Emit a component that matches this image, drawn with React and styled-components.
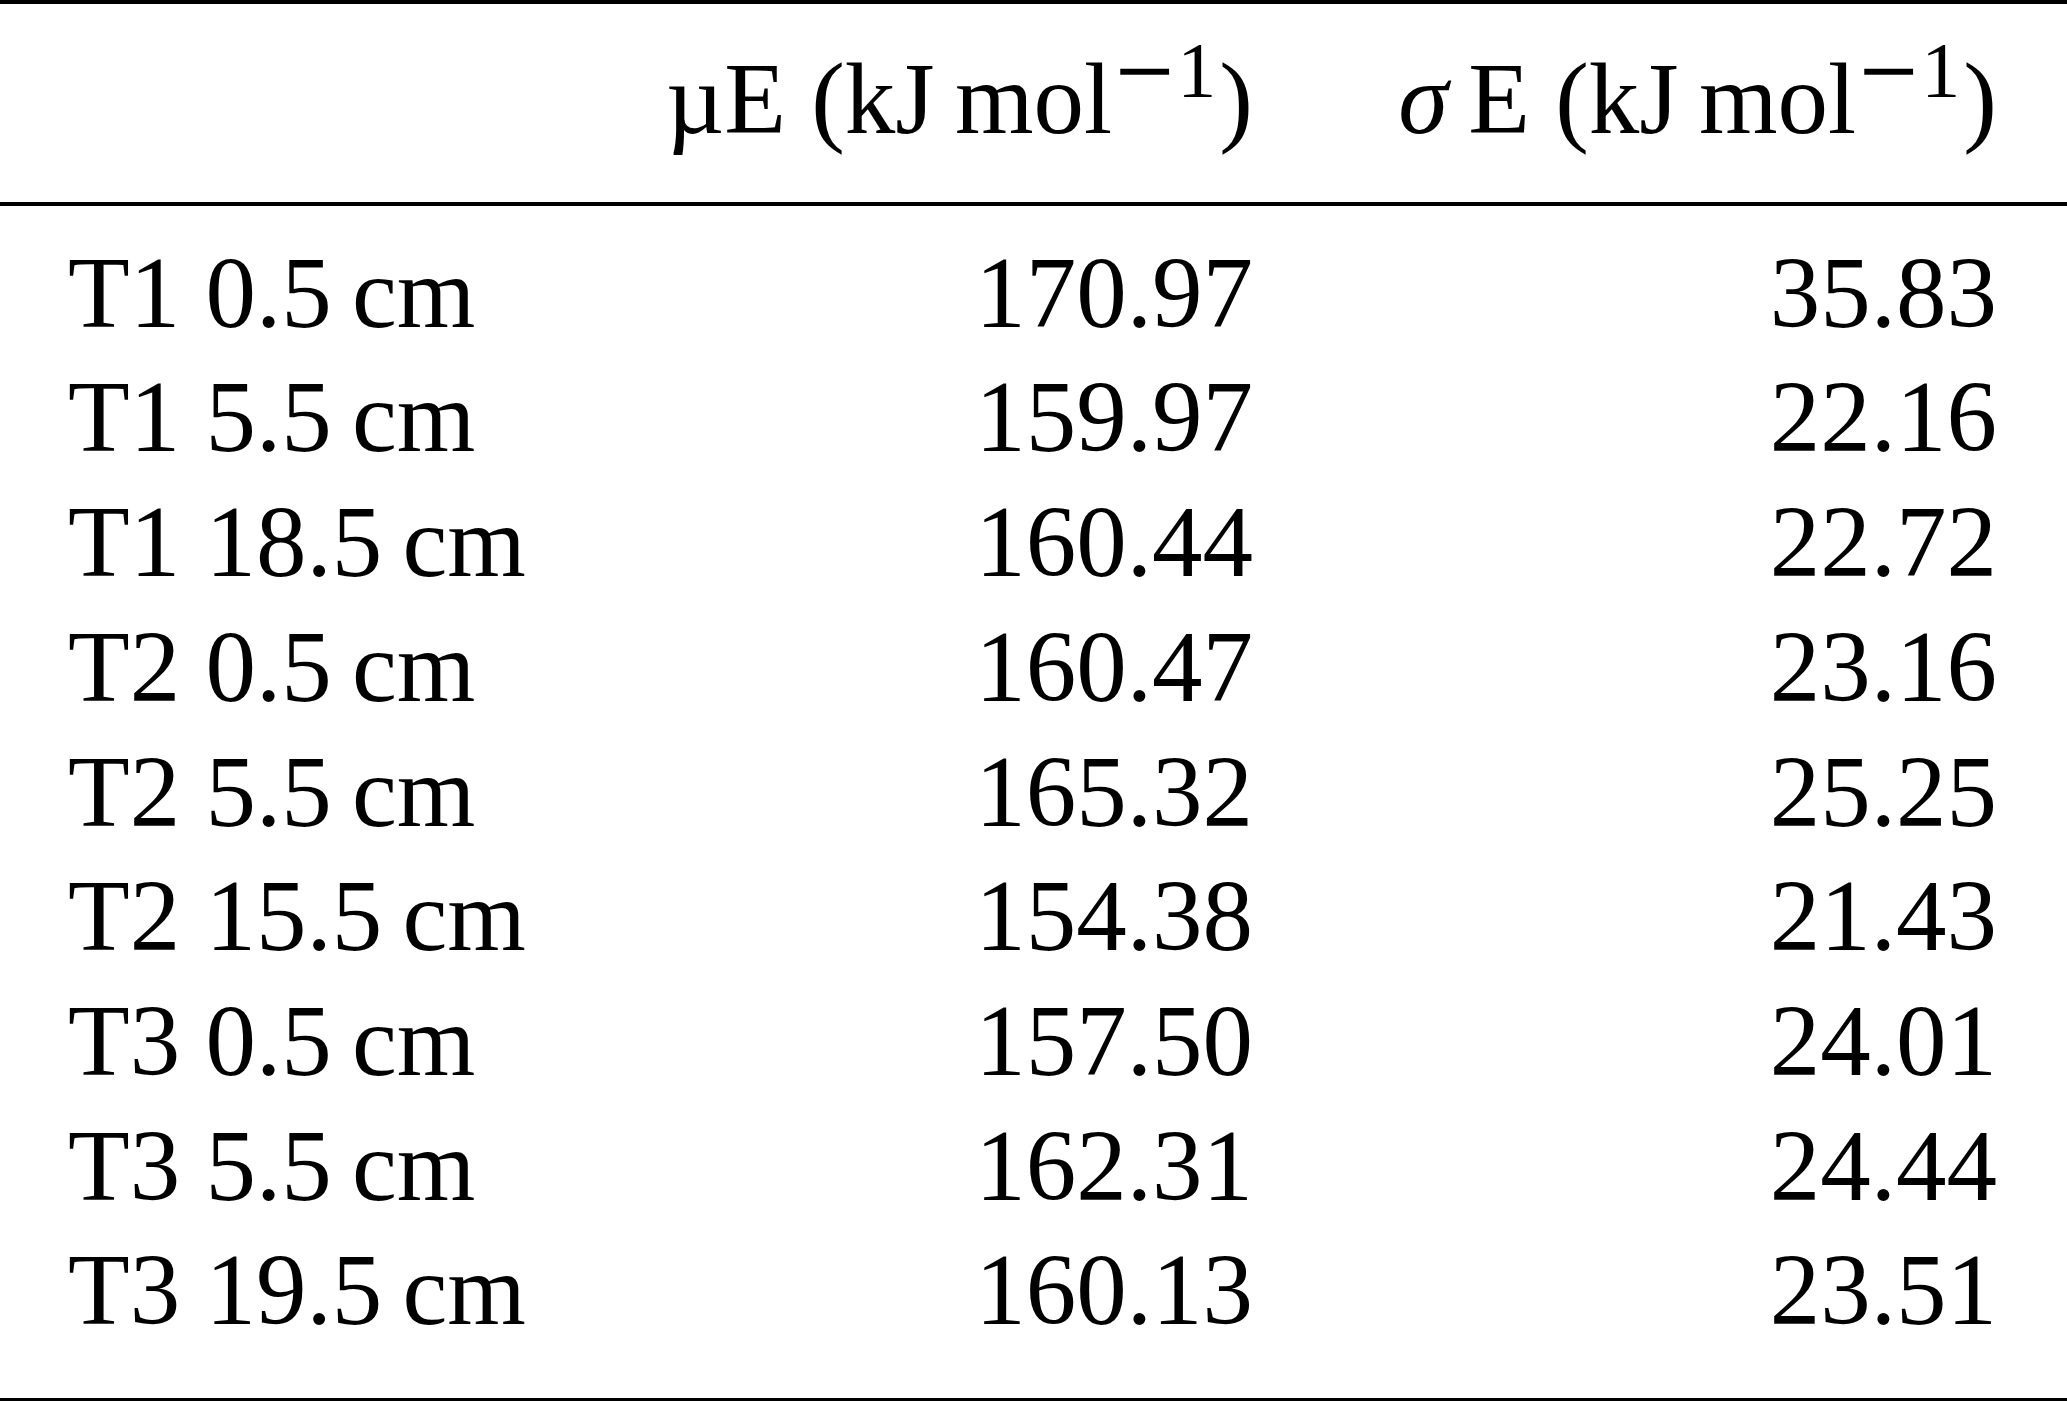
import React from "react";
import styled, { createGlobalStyle } from "styled-components";

const GlobalStyle = createGlobalStyle`
  html, body {
    margin: 0;
    padding: 0;
    background: #ffffff;
  }
  body {
    overflow: hidden;
  }
`;

const rows = [
  ["T1", "0.5", "170.97", "35.83"],
  ["T1", "5.5", "159.97", "22.16"],
  ["T1", "18.5", "160.44", "22.72"],
  ["T2", "0.5", "160.47", "23.16"],
  ["T2", "5.5", "165.32", "25.25"],
  ["T2", "15.5", "154.38", "21.43"],
  ["T3", "0.5", "157.50", "24.01"],
  ["T3", "5.5", "162.31", "24.44"],
  ["T3", "19.5", "160.13", "23.51"],
];

const Table = styled.div`
  width: 2067px;
  font-family: "Liberation Serif", "Times New Roman", serif;
  font-size: 101px;
  color: #000;
  border-top: 4px solid #000;
  border-bottom: 4px solid #000;
`;

const Head = styled.div`
  padding: 33px 0 40px;
  border-bottom: 4px solid #000;
`;

const Body = styled.div`
  padding: 25px 0 45px;
`;

const Row = styled.div`
  display: grid;
  grid-template-columns: 1fr 640px 744px;
  padding: 0 70px 0 68px;
  line-height: 124.7px;
  white-space: nowrap;
`;

const Cell = styled.div`
  text-align: ${(p) => (p.$align === "right" ? "right" : "left")};
`;

const Sup = styled.span`
  font-size: 78px;
  line-height: 0;
  vertical-align: 37px;
`;

const Minus = styled.span`
  font-family: "DejaVu Serif", serif;
`;

const Paren = styled.span`
  margin-left: 3px;
`;

const Sigma = styled.i`
  font-style: italic;
`;

const Unit = () => (
  <>
    (kJ{"\u2009"}mol
    <Sup>
      <Minus>−</Minus>1
    </Sup>
    <Paren>)</Paren>
  </>
);

export default function App() {
  return (
    <>
      <GlobalStyle />
      <Table>
        <Head>
          <Row>
            <Cell />
            <Cell $align="right">
              µE <Unit />
            </Cell>
            <Cell $align="right">
              <Sigma>σ</Sigma>
              {"\u2009"}E <Unit />
            </Cell>
          </Row>
        </Head>
        <Body>
          {rows.map(([t, d, mu, sigma]) => (
            <Row key={t + d}>
              <Cell>
                {t} {d}
                {"\u2009"}cm
              </Cell>
              <Cell $align="right">{mu}</Cell>
              <Cell $align="right">{sigma}</Cell>
            </Row>
          ))}
        </Body>
      </Table>
    </>
  );
}
